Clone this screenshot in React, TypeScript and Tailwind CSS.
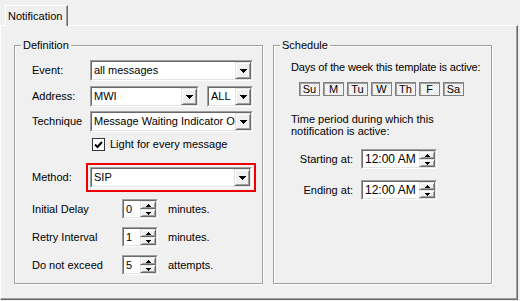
import clsx from 'clsx';

const sunkenOuter = 'border border-t-[#a0a0a0] border-l-[#a0a0a0] border-r-white border-b-white';
const sunkenInner = 'border border-t-[#696969] border-l-[#696969] border-r-[#e3e3e3] border-b-[#e3e3e3]';
const raised =
  'border border-t-[#e3e3e3] border-l-[#e3e3e3] border-r-[#696969] border-b-[#696969] shadow-[inset_1px_1px_0_#ffffff,inset_-1px_-1px_0_#a0a0a0]';

const DropArrow = () => (
  <svg width="7" height="4" viewBox="0 0 7 4" shapeRendering="crispEdges">
    <path d="M0 0h7v1h-1v1h-1v1h-1v1h-1v-1h-1v-1h-1v-1h-1z" fill="#000" />
  </svg>
);

const SpinArrow = ({ up }: { up?: boolean }) => (
  <svg width="5" height="3" viewBox="0 0 5 3" shapeRendering="crispEdges">
    {up ? (
      <path d="M2 0h1v1h1v1h1v1h-5v-1h1v-1h1z" fill="#000" />
    ) : (
      <path d="M0 0h5v1h-1v1h-1v1h-1v-1h-1v-1h-1z" fill="#000" />
    )}
  </svg>
);

const Combo = ({ value, className }: { value: string; className?: string }) => (
  <div className={clsx('flex h-[21px] min-w-0 bg-white', sunkenOuter, className)}>
    <div className={clsx('flex min-w-0 flex-1', sunkenInner)}>
      <span className="min-w-0 flex-1 overflow-hidden whitespace-nowrap pl-[2px] leading-[17px]">{value}</span>
      <div className={clsx('flex w-[16px] shrink-0 items-center justify-center bg-[#f0f0f0]', raised)}>
        <DropArrow />
      </div>
    </div>
  </div>
);

const Spin = ({ value, className, big }: { value: string; className?: string; big?: boolean }) => (
  <div className={clsx('flex h-[20px] bg-white', sunkenOuter, className)}>
    <div className={clsx('flex min-w-0 flex-1', sunkenInner)}>
      <span className={clsx('flex-1 whitespace-nowrap pl-[2px]', big ? 'text-[12px] leading-[16px]' : 'leading-[16px]')}>
        {value}
      </span>
      <div className="flex w-[16px] shrink-0 flex-col">
        <div className={clsx('flex flex-1 items-center justify-center bg-[#f0f0f0]', raised)}>
          <SpinArrow up />
        </div>
        <div className={clsx('flex flex-1 items-center justify-center bg-[#f0f0f0]', raised)}>
          <SpinArrow />
        </div>
      </div>
    </div>
  </div>
);

const Group = ({ title, className, children }: { title: string; className?: string; children: React.ReactNode }) => (
  <fieldset
    className={clsx(
      'min-w-0 shrink-0 border border-[#a0a0a0] shadow-[inset_1px_1px_0_#ffffff,1px_1px_0_#ffffff]',
      className,
    )}>
    <legend className="ml-[6px] bg-[#f0f0f0] px-[2px] leading-[13px]">{title}</legend>
    {children}
  </fieldset>
);

const days = ['Su', 'M', 'Tu', 'W', 'Th', 'F', 'Sa'];

export default function App() {
  return (
    <div className="h-[301px] w-[520px] bg-[#f0f0f0] text-[11px] text-black [font-family:'Liberation_Sans',Arial,sans-serif]">
      <div className="flex h-[25px] items-end pl-[5px]">
        <div className="relative z-10 -mb-px flex h-[21px] w-[63px] items-center border-t border-l border-r border-t-white border-l-white border-r-[#696969] bg-[#f0f0f0] pl-[2px] shadow-[inset_-1px_0_0_#a0a0a0]">
          Notification
        </div>
      </div>
      <div className="flex h-[275px] w-[518px] gap-[10px] border border-t-white border-l-white border-r-[#696969] border-b-[#696969] pt-[13px] pl-[13px] shadow-[inset_-1px_-1px_0_#a0a0a0]">
        <Group title="Definition" className="h-[245px] w-[249px]">
          <div className="flex flex-col pt-[8px] pl-[17px] pr-[9px]">
            <div className="flex items-center">
              <span className="w-[58px] shrink-0">Event:</span>
              <Combo value="all messages" className="flex-1" />
            </div>
            <div className="mt-[5px] flex items-center">
              <span className="w-[58px] shrink-0">Address:</span>
              <Combo value="MWI" className="w-[109px] shrink-0" />
              <Combo value="ALL" className="ml-[8px] flex-1" />
            </div>
            <div className="mt-[4px] flex items-center">
              <span className="w-[58px] shrink-0">Technique</span>
              <Combo value="Message Waiting Indicator ON" className="flex-1" />
            </div>
            <div className="mt-[6px] flex h-[13px] items-center pl-[60px]">
              <div className="flex h-[13px] w-[13px] items-center justify-center border border-[#333] bg-white">
                <svg width="9" height="8" viewBox="0 0 9 8">
                  <path d="M1 3.5l2.5 2.5L8 1" fill="none" stroke="#000" strokeWidth="2" />
                </svg>
              </div>
              <span className="ml-[5px]">Light for every message</span>
            </div>
            <div className="mt-[12px] flex items-center">
              <span className="w-[54px] shrink-0">Method:</span>
              <div className="-mr-[3px] flex min-w-0 flex-1 border-2 border-[#ee0000] p-[2px]">
                <Combo value="SIP" className="flex-1" />
              </div>
            </div>
            <div className="mt-[7px] flex items-center">
              <span className="w-[90px]">Initial Delay</span>
              <Spin value="0" className="w-[36px]" />
              <span className="ml-[10px]">minutes.</span>
            </div>
            <div className="mt-[8px] flex items-center">
              <span className="w-[90px]">Retry Interval</span>
              <Spin value="1" className="w-[36px]" />
              <span className="ml-[10px]">minutes.</span>
            </div>
            <div className="mt-[8px] flex items-center">
              <span className="w-[90px]">Do not exceed</span>
              <Spin value="5" className="w-[36px]" />
              <span className="ml-[10px]">attempts.</span>
            </div>
          </div>
        </Group>
        <Group title="Schedule" className="h-[245px] w-[219px]">
          <div className="flex flex-col pt-[9px] pl-[17px]">
            <span className="whitespace-nowrap leading-[13px] tracking-[-0.15px]">
              Days of the week this template is active:
            </span>
            <div className="mt-[8px] flex gap-[3px] pl-[8px]">
              {days.map((d) => (
                <div
                  key={d}
                  className="flex h-[14px] w-[21px] items-center justify-center border border-[#808080] bg-[repeating-conic-gradient(#ffffff_0_25%,#e6e6e6_0_50%)] bg-[length:2px_2px] leading-[12px] shadow-[inset_1px_1px_0_#a0a0a0]">
                  {d}
                </div>
              ))}
            </div>
            <span className="mt-[17px] leading-[12px]">
              Time period during which this
              <br />
              notification is active:
            </span>
            <div className="mt-[12px] flex items-center">
              <span className="w-[62px] text-right">Starting at:</span>
              <Spin value="12:00 AM" className="ml-[8px] w-[76px]" big />
            </div>
            <div className="mt-[11px] flex items-center">
              <span className="w-[62px] text-right">Ending at:</span>
              <Spin value="12:00 AM" className="ml-[8px] w-[76px]" big />
            </div>
          </div>
        </Group>
      </div>
    </div>
  );
}
